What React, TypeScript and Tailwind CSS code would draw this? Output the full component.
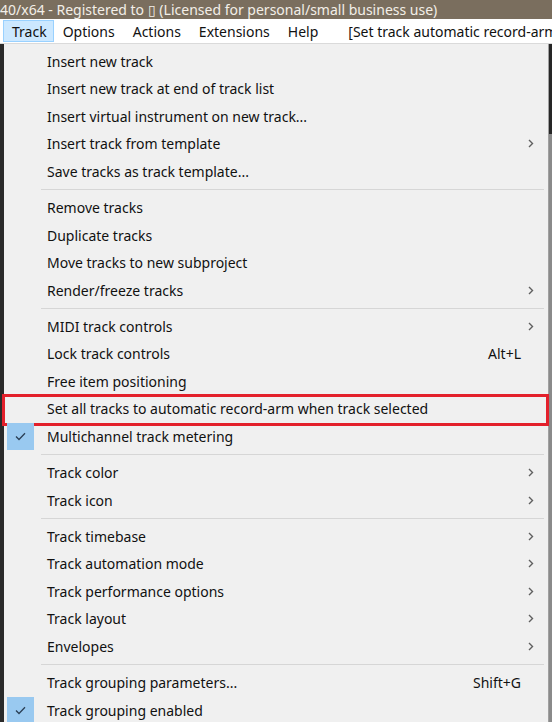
import React from 'react';

type Item = {
    label: string;
    shortcut?: string;
    sub?: boolean;
    checked?: boolean;
    marked?: boolean;
};

const groups: Item[][] = [
    [
        { label: 'Insert new track' },
        { label: 'Insert new track at end of track list' },
        { label: 'Insert virtual instrument on new track...' },
        { label: 'Insert track from template', sub: true },
        { label: 'Save tracks as track template...' },
    ],
    [
        { label: 'Remove tracks' },
        { label: 'Duplicate tracks' },
        { label: 'Move tracks to new subproject' },
        { label: 'Render/freeze tracks', sub: true },
    ],
    [
        { label: 'MIDI track controls', sub: true },
        { label: 'Lock track controls', shortcut: 'Alt+L' },
        { label: 'Free item positioning' },
        { label: 'Set all tracks to automatic record-arm when track selected', marked: true },
        { label: 'Multichannel track metering', checked: true },
    ],
    [
        { label: 'Track color', sub: true },
        { label: 'Track icon', sub: true },
    ],
    [
        { label: 'Track timebase', sub: true },
        { label: 'Track automation mode', sub: true },
        { label: 'Track performance options', sub: true },
        { label: 'Track layout', sub: true },
        { label: 'Envelopes', sub: true },
    ],
    [
        { label: 'Track grouping parameters...', shortcut: 'Shift+G' },
        { label: 'Track grouping enabled', checked: true },
    ],
];

const Chevron = () => (
    <svg width="6" height="9" viewBox="0 0 6 9" fill="none">
        <path d="M1 1l3.5 3.5L1 8" stroke="#606060" strokeWidth="1.4" />
    </svg>
);

const Check = () => (
    <svg width="11" height="9" viewBox="0 0 11 9" fill="none">
        <path d="M1 4.5l3 3L10 1.2" stroke="#2a3f55" strokeWidth="1.3" />
    </svg>
);

const MenuRow = ({ item }: { item: Item }) => (
    <div className="relative flex h-[27.5px] items-center text-[14px] text-[#111]">
        <div className="flex h-full w-[43px] shrink-0 items-center pl-[3px]">
            {item.checked && (
                <div className="flex h-[27px] w-[27px] items-center justify-center bg-[#99c9f0]">
                    <Check />
                </div>
            )}
        </div>
        <span className="flex-1 whitespace-nowrap">{item.label}</span>
        {item.shortcut && <span className="whitespace-nowrap">{item.shortcut}</span>}
        <div className="flex w-[27px] shrink-0 items-center pl-[7px]">{item.sub && <Chevron />}</div>
        {/* red annotation box */}
        {item.marked && (
            <div className="pointer-events-none absolute -left-[2px] -right-[1px] -top-[1px] h-[32px] border-[3px] border-[#e3202b]" />
        )}
    </div>
);

export default function App() {
    const menus = ['Options', 'Actions', 'Extensions', 'Help'];

    return (
        <div className="h-[722px] w-[552px] overflow-hidden bg-[#2b2b2b] font-['Segoe_UI','Noto_Sans',sans-serif]">
            {/* Title bar */}
            <div className="flex h-[19px] items-center overflow-hidden whitespace-nowrap bg-[#7a6e5e] text-[14px] leading-none text-[#f3efe8]">
                40/x64 - Registered to ▯ (Licensed for personal/small business use)
            </div>

            {/* Menu bar */}
            <div className="flex h-[25px] items-center overflow-hidden whitespace-nowrap border-b border-[#dadada] bg-white text-[14px] text-[#111]">
                <div className="ml-[3px] flex h-[22px] items-center border border-[#99d1ff] bg-[#cce8ff] pl-[8px] pr-[6px]">Track</div>
                {menus.map((m) => (
                    <div key={m} className="px-[9px]">{m}</div>
                ))}
                <div className="pl-[21px]">[Set track automatic record-arm</div>
            </div>

            <div className="flex">
                <div className="w-[4px] shrink-0 bg-[#2a2a2a]" />
                {/* Dropdown */}
                <div className="w-[544px] bg-[#f0f0f0] pt-[3.5px]">
                    {groups.map((g, gi) => (
                        <div key={gi}>
                            {gi > 0 && (
                                <div className="flex h-[8.8px] items-center">
                                    <div className="ml-[37px] mr-[4px] h-px flex-1 bg-[#d6d6d6]" />
                                </div>
                            )}
                            {g.map((item) => (
                                <MenuRow key={item.label} item={item} />
                            ))}
                        </div>
                    ))}
                </div>
                <div className="w-[1px] shrink-0 bg-[#a0a0a0]" />
                <div className="flex w-[3px] shrink-0 flex-col">
                    <div className="h-[90px] bg-[#262626]" />
                    <div className="flex-1 bg-[#8a8a8a]" />
                </div>
            </div>
        </div>
    );
}
